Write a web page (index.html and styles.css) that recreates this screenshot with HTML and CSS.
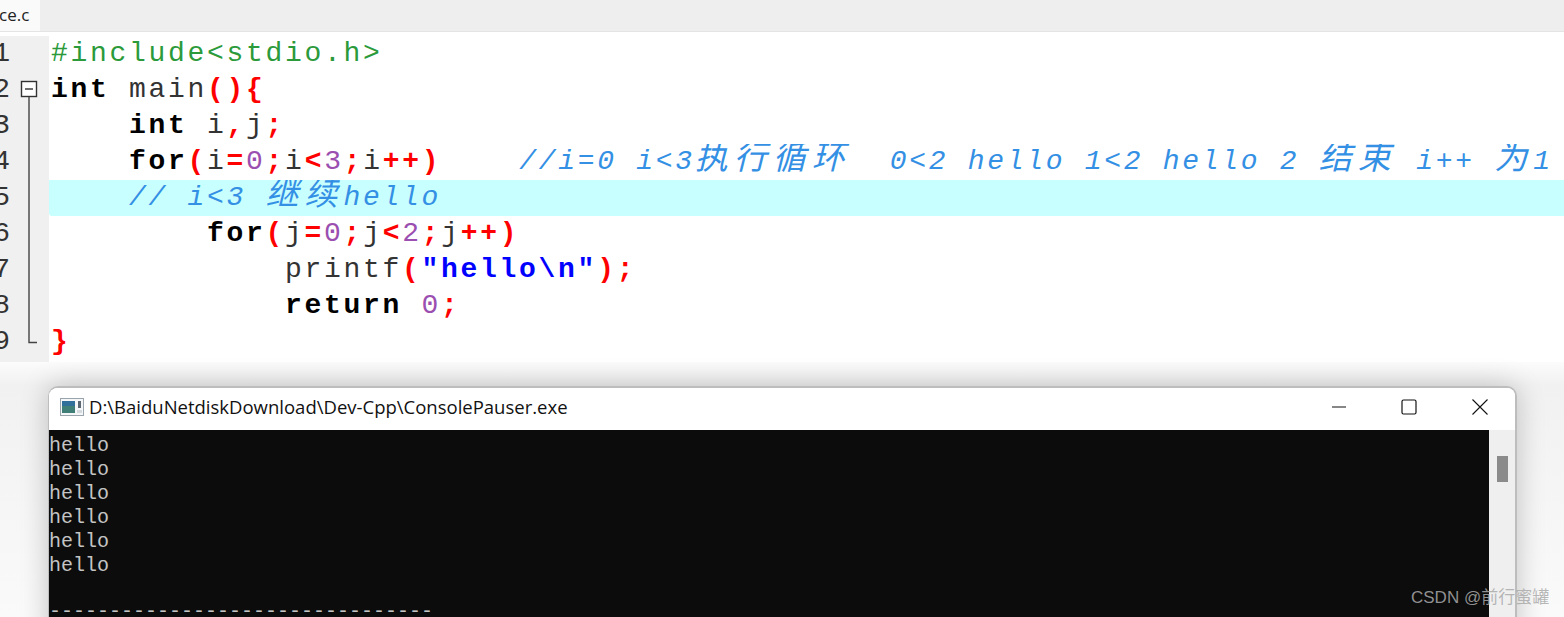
FILE: index.html
```html
<!DOCTYPE html>
<html lang="zh">
<head>
<meta charset="utf-8">
<title>ConsolePauser</title>
<link rel="stylesheet" href="styles.css">
</head>
<body>
<div class="screen">
  <div class="tabbar"><div class="tab"><span class="tab-label">ce.c</span></div></div>
  <div class="editor">
    <div class="gutter">
      <div class="num"><span>1</span></div>
      <div class="num"><span>2</span></div>
      <div class="num"><span>3</span></div>
      <div class="num"><span>4</span></div>
      <div class="num"><span>5</span></div>
      <div class="num"><span>6</span></div>
      <div class="num"><span>7</span></div>
      <div class="num"><span>8</span></div>
      <div class="num"><span>9</span></div>
      <svg class="fold" width="20" height="270" viewBox="0 0 20 270">
        <rect x="1.5" y="1.5" width="15" height="15" fill="#fff" stroke="#333" stroke-width="1.4"/>
        <path d="M5 9H13" stroke="#333" stroke-width="1.4" fill="none"/>
        <path d="M9 17V262.5H17" stroke="#444" stroke-width="1.4" fill="none"/>
      </svg>
    </div>
    <div class="code">
      <div class="line"><span class="pp">#include&lt;stdio.h&gt;</span></div>
      <div class="line"><span class="kw">int</span> <span class="id">main</span><span class="sym">(){</span></div>
      <div class="line">    <span class="kw">int</span> <span class="id">i</span><span class="sym">,</span><span class="id">j</span><span class="sym">;</span></div>
      <div class="line">    <span class="kw">for</span><span class="sym">(</span><span class="id">i</span><span class="sym">=</span><span class="nm">0</span><span class="sym">;</span><span class="id">i</span><span class="sym">&lt;</span><span class="nm">3</span><span class="sym">;</span><span class="id">i</span><span class="sym">++)</span>    <span class="cm">//i=0 i&lt;3<span class="cjk">执行循环</span>  0&lt;2 hello 1&lt;2 hello 2 <span class="cjk">结束</span> i++ <span class="cjk">为</span>1</span></div>
      <div class="line active">    <span class="cm">// i&lt;3 <span class="cjk">继续</span>hello</span></div>
      <div class="line">        <span class="kw">for</span><span class="sym">(</span><span class="id">j</span><span class="sym">=</span><span class="nm">0</span><span class="sym">;</span><span class="id">j</span><span class="sym">&lt;</span><span class="nm">2</span><span class="sym">;</span><span class="id">j</span><span class="sym">++)</span></div>
      <div class="line">            <span class="id">printf</span><span class="sym">(</span><span class="str">"hello\n"</span><span class="sym">);</span></div>
      <div class="line">            <span class="kw">return</span> <span class="nm">0</span><span class="sym">;</span></div>
      <div class="line"><span class="sym">}</span></div>
    </div>
  </div>
  <div class="window">
    <div class="titlebar">
      <svg class="app-icon" width="24" height="18" viewBox="0 0 24 18">
        <rect x="0.5" y="0.5" width="23" height="17" fill="#f4f6f8" stroke="#9aa4ad"/>
        <rect x="2" y="3" width="13" height="12" fill="#3f7f78"/>
        <rect x="2" y="3" width="13" height="5" fill="#2f6f9a"/>
        <rect x="18" y="3" width="3" height="7" fill="#5a6670"/>
        <rect x="17" y="12" width="5" height="3" fill="#d5dade"/>
      </svg>
      <span class="title">D:\BaiduNetdiskDownload\Dev-Cpp\ConsolePauser.exe</span>
      <div class="controls">
        <svg width="16" height="16" viewBox="0 0 16 16"><path d="M2 8H16" stroke="#111" stroke-width="1.1" fill="none"/></svg>
        <svg width="16" height="16" viewBox="0 0 16 16"><rect x="1" y="1" width="14" height="14" rx="1.5" stroke="#111" stroke-width="1.2" fill="none"/></svg>
        <svg width="16" height="16" viewBox="0 0 16 16"><path d="M0.5 0.5L15.5 15.5M15.5 0.5L0.5 15.5" stroke="#111" stroke-width="1.1" fill="none"/></svg>
      </div>
    </div>
    <div class="body">
      <pre class="console">hello
hello
hello
hello
hello
hello

<span class="rule">--------------------------------</span></pre>
      <div class="scrollbar"><div class="thumb"></div></div>
    </div>
  </div>
  <div class="watermark">CSDN @前行蜜罐</div>
</div>
</body>
</html>
```
FILE: styles.css
```css
* { box-sizing: border-box; }
html, body { margin: 0; padding: 0; background: #fff; }
.screen {
  position: relative;
  width: 1564px;
  height: 617px;
  overflow: hidden;
  background: linear-gradient(#fff 0, #fff 355px, #f1f1f1 385px, #fafafa 100%);
}
.tabbar {
  height: 32px;
  background: #eee;
  border-bottom: 1px solid #e4e4e4;
  display: flex;
}
.tab {
  width: 40px;
  height: 31px;
  background: #fafafa;
  display: flex;
  align-items: center;
  overflow: hidden;
}
.tab-label {
  margin-left: -1px;
  padding-bottom: 3px;
  font: 500 17px "Open Sans", "Liberation Sans", sans-serif;
  color: #222;
}
.editor {
  display: flex;
  margin-top: 4px;
  height: 326px;
  background: #fff;
}
.gutter {
  position: relative;
  flex: 0 0 49px;
  background: #f0f0f0;
}
.num {
  height: 36px;
  width: 10px;
  display: flex;
  justify-content: flex-end;
  align-items: center;
  font: 28px/32px "Liberation Mono", monospace;
  color: #333;
}
.fold { position: absolute; left: 20px; top: 44px; }
.code {
  flex: 1;
  min-width: 0;
  font: 28px/36px "Liberation Mono", monospace;
  letter-spacing: 2.7px;
  color: #333;
}
.line { height: 36px; padding-left: 2px; overflow: hidden; white-space: pre; }
.active { background: #c8ffff; border-radius: 0 0 0 3px; }
.pp { color: #2b9a3a; }
.kw { font-weight: 700; color: #000; }
.id { color: #333; }
.sym { font-weight: 700; color: #f00; }
.nm { color: #9b4fb0; }
.str { font-weight: 700; color: #00f; }
.cm { font-style: italic; color: #3490e4; }
.cjk {
  font-family: "Noto Sans CJK SC", sans-serif;
  font-size: 33px;
  letter-spacing: 6px;
  font-weight: 400;
  line-height: 0;
}
.window {
  margin: 24px 0 0 48px;
  width: 1469px;
  height: 260px;
  background: #fff;
  border: solid #bdbdbd;
  border-width: 2px 2px 0 1px;
  border-radius: 10px 10px 0 0;
  box-shadow: 0 0 28px rgba(0, 0, 0, .22);
  overflow: hidden;
}
.titlebar {
  height: 42px;
  display: flex;
  align-items: center;
  padding: 0 0 5px 11px;
  background: #fff;
}
.app-icon { flex: none; }
.title {
  margin-left: 5px;
  font: 18.5px "Open Sans", "Liberation Sans", sans-serif;
  color: #111;
  white-space: nowrap;
}
.controls {
  margin-left: auto;
  margin-right: 27px;
  display: flex;
  gap: 55px;
}
.body { display: flex; height: 218px; }
.console {
  flex: 1;
  margin: 0;
  background: #0c0c0c;
  color: #c4c4c4;
  font: 20px/24px "Liberation Mono", monospace;
  padding-top: 4px;
  overflow: hidden;
}
.rule { display: block; margin-top: -2px; }
.scrollbar {
  flex: 0 0 26px;
  background: #efefef;
  padding: 26px 7px 0 8px;
}
.thumb { height: 26px; background: #8b8b8b; }
.watermark {
  position: absolute;
  left: 1411px;
  top: 588px;
  font: 17px/20px "Liberation Sans", "Noto Sans CJK SC", sans-serif;
  color: rgba(170, 170, 170, .85);
  white-space: nowrap;
}
```
